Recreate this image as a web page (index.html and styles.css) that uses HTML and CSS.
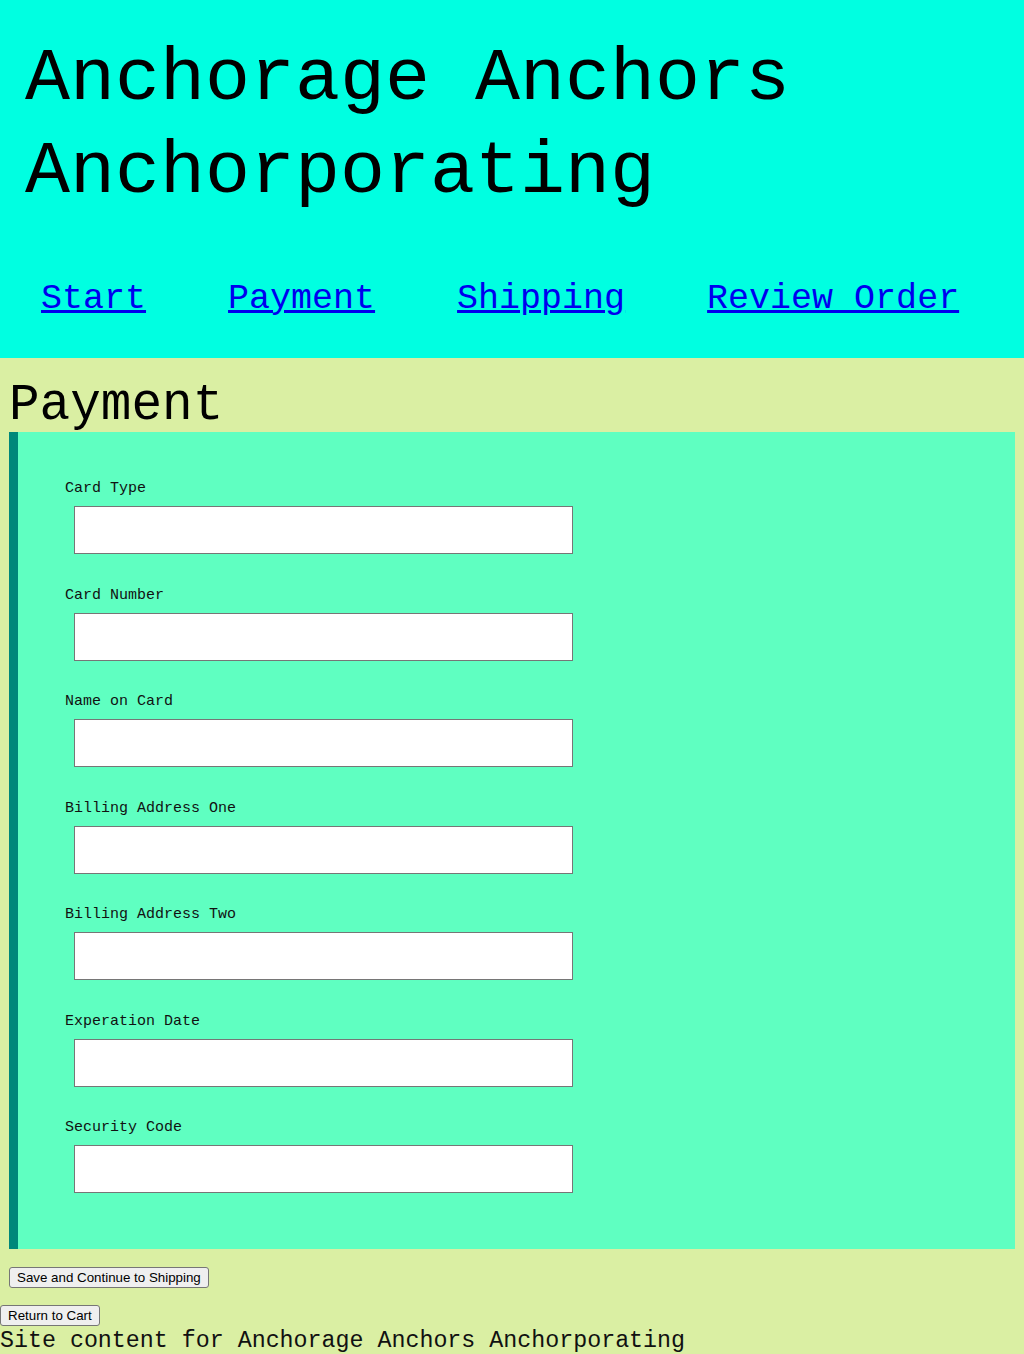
FILE: index.html
```html
<!DOCTYPE html>
<html lang="en">
<head>
<meta charset="utf-8">
<title>Payment - Anchorage Anchors Anchorporating</title>
<link rel="stylesheet" href="styles.css">
</head>
<body>
<header class="site-header">
  <h1 class="site-title">Anchorage Anchors Anchorporating</h1>
  <nav class="site-nav">
    <a href="#">Start</a>
    <a href="#">Payment</a>
    <a href="#">Shipping</a>
    <a href="#">Review Order</a>
  </nav>
</header>
<main class="main">
  <h2 class="page-title">Payment</h2>
  <form class="form">
    <fieldset class="fields">
      <div class="field"><label>Card Type</label><input type="text"></div>
      <div class="field"><label>Card Number</label><input type="text"></div>
      <div class="field"><label>Name on Card</label><input type="text"></div>
      <div class="field"><label>Billing Address One</label><input type="text"></div>
      <div class="field"><label>Billing Address Two</label><input type="text"></div>
      <div class="field"><label>Experation Date</label><input type="text"></div>
      <div class="field"><label>Security Code</label><input type="text"></div>
    </fieldset>
    <button type="button" class="btn">Save and Continue to Shipping</button>
  </form>
</main>
<button type="button" class="btn">Return to Cart</button>
<footer class="site-footer">Site content for Anchorage Anchors Anchorporating</footer>
</body>
</html>
```
FILE: styles.css
```css
html, body {
  margin: 0;
  padding: 0;
}
body {
  background: #daefa3;
  font-family: "Liberation Mono", "DejaVu Sans Mono", monospace;
  color: #000;
}
.site-header {
  background: #00ffe1;
  height: 358px;
  padding-top: 33px;
  box-sizing: border-box;
}
.site-title {
  margin: 0 0 0 25px;
  font-size: 75px;
  line-height: 93px;
  font-weight: normal;
  max-width: 800px;
}
.site-nav {
  display: flex;
  gap: 82px;
  padding-left: 41px;
  margin-top: 60px;
  font-size: 35px;
}
.site-nav a {
  color: #0000ee;
  text-decoration: underline;
  text-decoration-thickness: 3px;
}
.main {
  padding: 21px 9px 0;
}
.page-title {
  margin: 0;
  font-size: 51px;
  line-height: 53px;
  font-weight: normal;
}
.form {
  margin: 0;
}
.fields {
  margin: 0;
  border: 0;
  border-left: 9px solid #00887a;
  background: #5fffc1;
  padding: 48px 0 56px 47px;
  display: flex;
  flex-direction: column;
  gap: 32.5px;
  min-width: 0;
}
.field {
  display: flex;
  flex-direction: column;
  gap: 9px;
}
.field label {
  font-size: 15px;
  line-height: 17px;
  color: #111;
}
.field input {
  margin-left: 9px;
  width: 499px;
  height: 48px;
  box-sizing: border-box;
  border: 1px solid #767676;
  background: #fff;
  padding: 0 4px;
}
.btn {
  display: block;
  font-family: "Liberation Sans", Arial, sans-serif;
  font-size: 13.333px;
  line-height: 15px;
  height: 21px;
  padding: 1px 7px;
  border: 1px solid #767676;
  border-radius: 3px;
  background: #efefef;
  color: #000;
  box-sizing: border-box;
}
.form .btn {
  margin-top: 18px;
}
.main + .btn {
  margin-top: 17px;
}
.site-footer {
  font-size: 23.3px;
  line-height: 27px;
  padding-top: 2px;
  color: #111;
  white-space: nowrap;
}
```
